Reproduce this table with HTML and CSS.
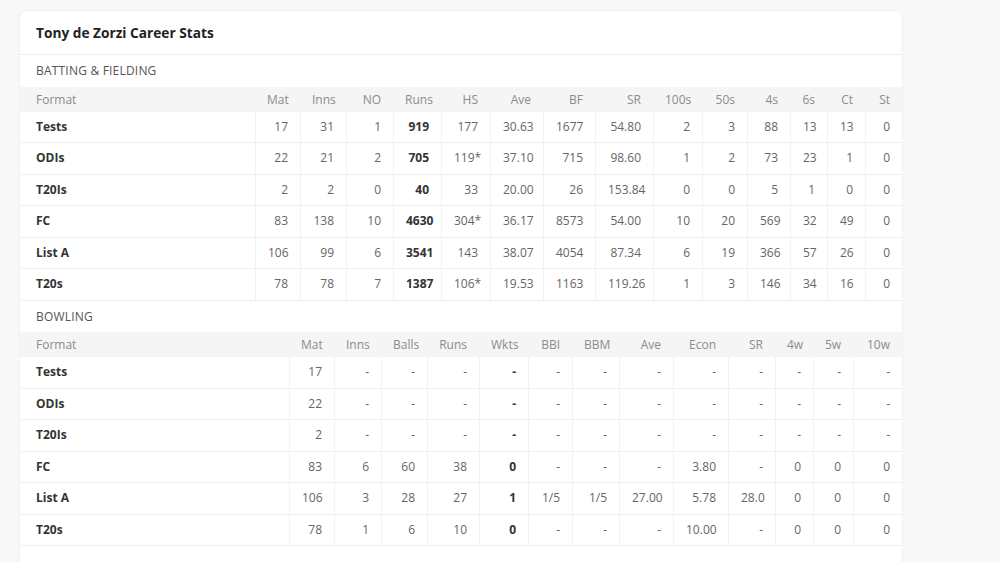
FILE: index.html
```html
<!DOCTYPE html>
<html lang="en">
<head>
<meta charset="utf-8">
<title>Tony de Zorzi Career Stats</title>
<link rel="stylesheet" href="styles.css">
</head>
<body>
<div class="page">
  <section class="card">
    <h1 class="card-title">Tony de Zorzi Career Stats</h1>

    <h2 class="section-label">Batting &amp; Fielding</h2>
    <table class="stats">
      <colgroup>
        <col class="w235"><col class="w45"><col class="w46"><col class="w47"><col class="w48"><col class="w49"><col class="w53"><col class="w52"><col class="w58"><col class="w49"><col class="w45"><col class="w43"><col class="w37"><col class="w38"><col class="w37">
      </colgroup>
      <thead>
        <tr><th class="fmt">Format</th><th>Mat</th><th>Inns</th><th>NO</th><th>Runs</th><th>HS</th><th>Ave</th><th>BF</th><th>SR</th><th>100s</th><th>50s</th><th>4s</th><th>6s</th><th>Ct</th><th>St</th></tr>
      </thead>
      <tbody>
        <tr><td class="fmt">Tests</td><td>17</td><td>31</td><td>1</td><td class="b">919</td><td>177</td><td>30.63</td><td>1677</td><td>54.80</td><td>2</td><td>3</td><td>88</td><td>13</td><td>13</td><td>0</td></tr>
        <tr><td class="fmt">ODIs</td><td>22</td><td>21</td><td>2</td><td class="b">705</td><td>119*</td><td>37.10</td><td>715</td><td>98.60</td><td>1</td><td>2</td><td>73</td><td>23</td><td>1</td><td>0</td></tr>
        <tr><td class="fmt">T20Is</td><td>2</td><td>2</td><td>0</td><td class="b">40</td><td>33</td><td>20.00</td><td>26</td><td>153.84</td><td>0</td><td>0</td><td>5</td><td>1</td><td>0</td><td>0</td></tr>
        <tr><td class="fmt">FC</td><td>83</td><td>138</td><td>10</td><td class="b">4630</td><td>304*</td><td>36.17</td><td>8573</td><td>54.00</td><td>10</td><td>20</td><td>569</td><td>32</td><td>49</td><td>0</td></tr>
        <tr><td class="fmt">List A</td><td>106</td><td>99</td><td>6</td><td class="b">3541</td><td>143</td><td>38.07</td><td>4054</td><td>87.34</td><td>6</td><td>19</td><td>366</td><td>57</td><td>26</td><td>0</td></tr>
        <tr><td class="fmt">T20s</td><td>78</td><td>78</td><td>7</td><td class="b">1387</td><td>106*</td><td>19.53</td><td>1163</td><td>119.26</td><td>1</td><td>3</td><td>146</td><td>34</td><td>16</td><td>0</td></tr>
      </tbody>
    </table>

    <h2 class="section-label">Bowling</h2>
    <table class="stats">
      <colgroup>
        <col class="w269"><col class="w45"><col class="w47"><col class="w46"><col class="w52"><col class="w49"><col class="w44"><col class="w47"><col class="w54"><col class="w55"><col class="w47"><col class="w38"><col class="w40"><col class="w49">
      </colgroup>
      <thead>
        <tr><th class="fmt">Format</th><th>Mat</th><th>Inns</th><th>Balls</th><th>Runs</th><th>Wkts</th><th>BBI</th><th>BBM</th><th>Ave</th><th>Econ</th><th>SR</th><th>4w</th><th>5w</th><th>10w</th></tr>
      </thead>
      <tbody>
        <tr><td class="fmt">Tests</td><td>17</td><td>-</td><td>-</td><td>-</td><td class="b">-</td><td>-</td><td>-</td><td>-</td><td>-</td><td>-</td><td>-</td><td>-</td><td>-</td></tr>
        <tr><td class="fmt">ODIs</td><td>22</td><td>-</td><td>-</td><td>-</td><td class="b">-</td><td>-</td><td>-</td><td>-</td><td>-</td><td>-</td><td>-</td><td>-</td><td>-</td></tr>
        <tr><td class="fmt">T20Is</td><td>2</td><td>-</td><td>-</td><td>-</td><td class="b">-</td><td>-</td><td>-</td><td>-</td><td>-</td><td>-</td><td>-</td><td>-</td><td>-</td></tr>
        <tr><td class="fmt">FC</td><td>83</td><td>6</td><td>60</td><td>38</td><td class="b">0</td><td>-</td><td>-</td><td>-</td><td>3.80</td><td>-</td><td>0</td><td>0</td><td>0</td></tr>
        <tr><td class="fmt">List A</td><td>106</td><td>3</td><td>28</td><td>27</td><td class="b">1</td><td>1/5</td><td>1/5</td><td>27.00</td><td>5.78</td><td>28.0</td><td>0</td><td>0</td><td>0</td></tr>
        <tr><td class="fmt">T20s</td><td>78</td><td>1</td><td>6</td><td>10</td><td class="b">0</td><td>-</td><td>-</td><td>-</td><td>10.00</td><td>-</td><td>0</td><td>0</td><td>0</td></tr>
      </tbody>
    </table>
    <div class="card-foot"></div>
  </section>
</div>
</body>
</html>
```

FILE: styles.css
```css
html, body {
  margin: 0;
  padding: 0;
}

body {
  background: #f7f8f7;
  font-family: "Open Sans", "Noto Sans", "DejaVu Sans", sans-serif;
  color: #555;
}

.page {
  padding: 11px 0 0 20px;
}

.card {
  width: 882px;
  background: #ffffff;
  border-radius: 8px 8px 0 0;
  box-shadow: 0 0 0 1px #f0f1f0;
}

.card-title {
  margin: 0;
  height: 43px;
  padding: 0 16px;
  display: flex;
  align-items: center;
  border-bottom: 1px solid #eeeeee;
  font-size: 13.7px;
  font-weight: 700;
  color: #222;
}

.section-label {
  margin: 0;
  height: 31.6px;
  padding: 0 16px;
  display: flex;
  align-items: center;
  font-size: 12px;
  font-weight: 400;
  text-transform: uppercase;
  letter-spacing: 0.2px;
  color: #555;
}

.stats {
  width: 882px;
  table-layout: fixed;
  border-collapse: separate;
  border-spacing: 0;
  font-size: 12px;
}

.stats th {
  background: #f4f5f4;
  font-weight: 400;
  color: #8c8c8c;
  text-align: right;
  line-height: 19px;
  padding: 3px 12px;
  white-space: nowrap;
}

.stats td {
  text-align: right;
  line-height: 18.5px;
  padding: 6px 12px;
  color: #666;
  border-bottom: 1px solid #efefef;
  border-left: 1px solid #f2f2f2;
  white-space: nowrap;
}

.stats .fmt {
  text-align: left;
  padding-left: 16px;
}

.stats td.fmt {
  border-left: none;
  font-weight: 700;
  color: #333;
}

.stats td.b {
  font-weight: 700;
  color: #333;
}

.card-foot {
  height: 40px;
}

.w235 { width: 235px; }
.w269 { width: 269px; }
.w37 { width: 37px; }
.w38 { width: 38px; }
.w40 { width: 40px; }
.w43 { width: 43px; }
.w44 { width: 44px; }
.w45 { width: 45px; }
.w46 { width: 46px; }
.w47 { width: 47px; }
.w48 { width: 48px; }
.w49 { width: 49px; }
.w52 { width: 52px; }
.w53 { width: 53px; }
.w54 { width: 54px; }
.w55 { width: 55px; }
.w58 { width: 58px; }
```
